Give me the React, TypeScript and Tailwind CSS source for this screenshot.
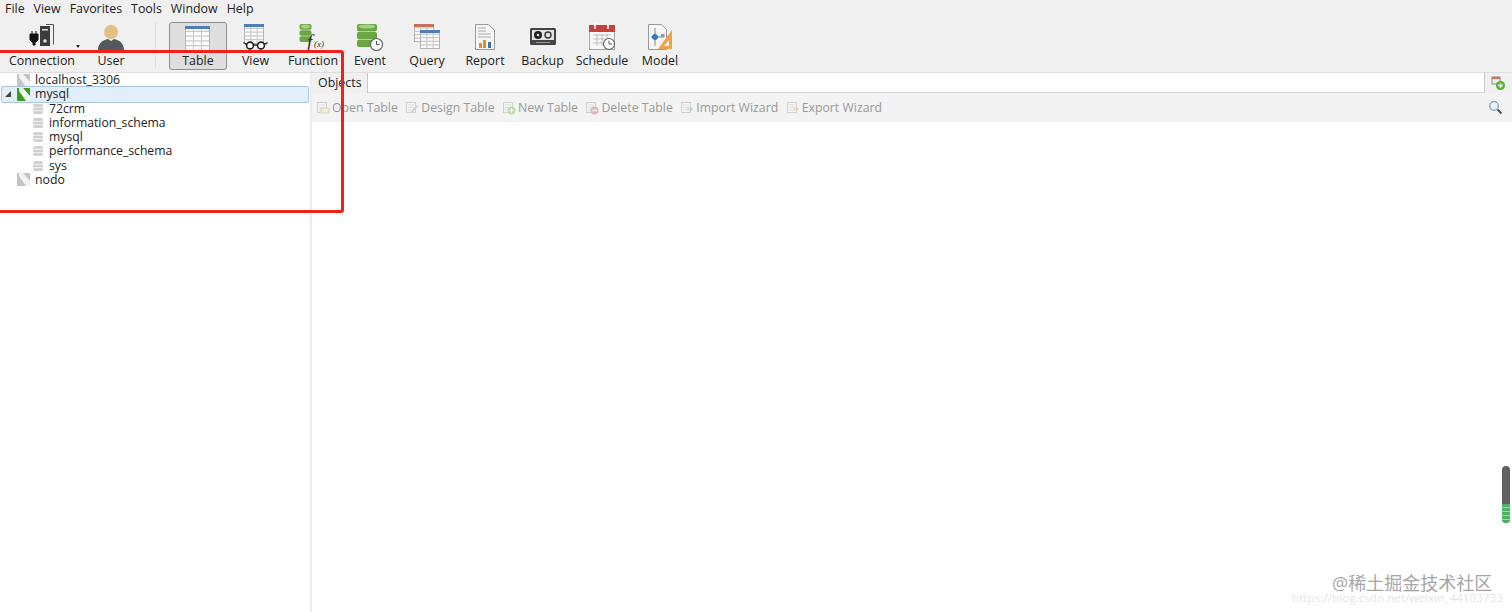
import type { ReactNode } from "react";

const font = "font-['Open_Sans','Noto_Sans_CJK_SC',sans-serif]";

function TableGrid({ x, y, w, h, head = "#4f7fb5" }: { x: number; y: number; w: number; h: number; head?: string }) {
  const rows = [];
  for (let i = 1; i < 5; i++) rows.push(y + (h * i) / 5);
  return (
    <g>
      <rect x={x} y={y} width={w} height={h} fill="#fbfbfb" stroke="#b4b4b4" />
      {rows.map((r) => (
        <line key={r} x1={x} x2={x + w} y1={r} y2={r} stroke="#bdbdbd" />
      ))}
      <line x1={x + w / 3} x2={x + w / 3} y1={y} y2={y + h} stroke="#c8c8c8" />
      <line x1={x + (2 * w) / 3} x2={x + (2 * w) / 3} y1={y} y2={y + h} stroke="#c8c8c8" />
      <rect x={x - 0.5} y={y - 0.5} width={w + 1} height={3} fill={head} />
    </g>
  );
}

function Drum({ x, y, w = 19, h = 22, color = "#6ba544" }: { x: number; y: number; w?: number; h?: number; color?: string }) {
  const band = (h - 1) / 3;
  return (
    <g>
      <rect x={x} y={y} width={w} height={band} rx={2} fill={color} />
      <rect x={x} y={y + band + 0.5} width={w} height={band} rx={2} fill={color} />
      <rect x={x} y={y + 2 * band + 1} width={w} height={band} rx={2} fill={color} />
      <ellipse cx={x + w / 2} cy={y + 2.5} rx={w / 2 - 1.5} ry={2} fill="#a6d180" />
    </g>
  );
}

function Clock({ cx, cy, r }: { cx: number; cy: number; r: number }) {
  return (
    <g>
      <circle cx={cx} cy={cy} r={r} fill="#fff" stroke="#666" strokeWidth={1.2} />
      <path d={`M${cx} ${cy - r * 0.6}V${cy}H${cx + r * 0.55}`} fill="none" stroke="#555" strokeWidth={1} />
    </g>
  );
}

const icons: Record<string, ReactNode> = {
  Connection: (
    <svg width="36" height="30" viewBox="0 0 36 30">
      <path d="M22 1.5h7.5v20" fill="none" stroke="#555" strokeWidth="1" />
      <rect x="16" y="3" width="10" height="20" fill="#3c3c3c" />
      <rect x="18" y="6" width="6" height="1.5" fill="#ddd" />
      <circle cx="21" cy="18" r="1.8" fill="#ddd" />
      <path d="M8 8v3M12 8v3M6 11h8v6l-2 2h-1v3H9v-3H8l-2-2z" fill="#111" stroke="#111" strokeWidth="1" />
    </svg>
  ),
  User: (
    <svg width="30" height="30" viewBox="0 0 30 30">
      <circle cx="15" cy="9" r="7" fill="#e3bf82" />
      <path d="M2 27c0-7 5-10 10-11l3 2 3-2c5 1 10 4 10 11z" fill="#55585c" />
    </svg>
  ),
  Table: (
    <svg width="28" height="28" viewBox="0 0 28 28">
      <TableGrid x={1.5} y={2.5} w={24} h={24} />
    </svg>
  ),
  View: (
    <svg width="30" height="30" viewBox="0 0 30 30">
      <TableGrid x={3.5} y={1.5} w={19} h={19} />
      <circle cx="9" cy="22.5" r="3.4" fill="#fff" stroke="#222" strokeWidth="1.6" />
      <circle cx="20" cy="22.5" r="3.4" fill="#fff" stroke="#222" strokeWidth="1.6" />
      <path d="M12.5 22h4M5.5 21.5l-3-2M23.5 21.5l3-2" stroke="#222" strokeWidth="1.4" />
    </svg>
  ),
  Function: (
    <svg width="30" height="30" viewBox="0 0 30 30">
      <Drum x={1.5} y={1} w={12} h={18} />
      <text x="9" y="25" fontFamily="Liberation Serif" fontStyle="italic" fontSize="19" fill="#333">f</text>
      <text x="16" y="24" fontFamily="Liberation Serif" fontStyle="italic" fontSize="9" fill="#333">(x)</text>
    </svg>
  ),
  Event: (
    <svg width="30" height="30" viewBox="0 0 30 30">
      <Drum x={2} y={1} w={20} h={23} />
      <Clock cx={21.5} cy={21.5} r={6} />
    </svg>
  ),
  Query: (
    <svg width="30" height="30" viewBox="0 0 30 30">
      <TableGrid x={2.5} y={1.5} w={19} h={17} head="#c9705a" />
      <TableGrid x={8.5} y={7.5} w={19} h={18} />
    </svg>
  ),
  Report: (
    <svg width="30" height="30" viewBox="0 0 30 30">
      <path d="M5.5 1.5h13l6 6v19h-19z" fill="#f6f6f6" stroke="#9a9a9a" />
      <path d="M8 5h8M8 8h8M8 11h13M8 14h13" stroke="#aaa" />
      <rect x="9" y="20" width="3" height="5" fill="#e98a2c" />
      <rect x="13" y="17" width="3" height="8" fill="#e98a2c" />
      <rect x="18" y="19" width="3" height="6" fill="#3a73b3" />
    </svg>
  ),
  Backup: (
    <svg width="30" height="30" viewBox="0 0 30 30">
      <rect x="2" y="5" width="26" height="17" rx="1.5" fill="#444" />
      <rect x="4" y="7" width="22" height="10" fill="#e4e4e4" />
      <circle cx="10" cy="12" r="4" fill="#222" />
      <circle cx="10" cy="12" r="1.3" fill="#ddd" />
      <circle cx="20" cy="12" r="3" fill="none" stroke="#333" strokeWidth="1.4" />
      <path d="M8 19.5h14" stroke="#999" />
    </svg>
  ),
  Schedule: (
    <svg width="30" height="30" viewBox="0 0 30 30">
      <rect x="2.5" y="2.5" width="25" height="24" fill="#f7f7f7" stroke="#a8a8a8" />
      <rect x="2" y="2" width="26" height="7" fill="#c8403c" />
      <path d="M8 0v6M21 0v6" stroke="#fff" strokeWidth="1.6" />
      <path d="M6 12h17M6 16h17M6 20h17M10 11v12M15 11v12M20 11v12" stroke="#c0c0c0" />
      <Clock cx={22} cy={21} r={5.5} />
    </svg>
  ),
  Model: (
    <svg width="30" height="30" viewBox="0 0 30 30">
      <path d="M3.5 1.5h13l5 5v20h-18z" fill="#f6f6f6" stroke="#9a9a9a" />
      <path d="M10 10l4 4-4 4-4-4z" fill="#3a78b8" />
      <path d="M10 5v5M10 18v5M14 14h4" stroke="#888" />
      <rect x="16" y="11" width="3.5" height="3.5" fill="#999" />
      <path d="M27 7v19H13z" fill="#eea24a" />
      <path d="M24 17v6h-5z" fill="#f6f6f6" />
    </svg>
  ),
};

const tools = [
  { label: "Connection", w: "w-[84px]" },
  { label: "User", w: "w-[54px]" },
  { label: "Table", w: "w-[58px]" },
  { label: "View", w: "w-[57px]" },
  { label: "Function", w: "w-[58px]" },
  { label: "Event", w: "w-[56px]" },
  { label: "Query", w: "w-[58px]" },
  { label: "Report", w: "w-[58px]" },
  { label: "Backup", w: "w-[57px]" },
  { label: "Schedule", w: "w-[62px]" },
  { label: "Model", w: "w-[54px]" },
];

function ToolButton({ label, w }: { label: string; w: string }) {
  const active = label === "Table";
  return (
    <div
      className={`${w} relative h-[48px] flex flex-col items-center shrink-0 rounded-[3px] ${
        active ? "border border-[#8f8f8f] bg-[#dedede]" : "pt-px"
      }`}
    >
      <div className="h-[30px] flex items-center justify-center">{icons[label]}</div>
      <span className="text-[12.4px] leading-[15px] text-[#222]">{label}</span>
      {label === "Connection" && <span className="absolute right-[4px] top-[23px] w-0 h-0 border-x-[2.5px] border-x-transparent border-t-[3px] border-t-[#222]" />}
    </div>
  );
}

function ServerIcon({ on }: { on?: boolean }) {
  return (
    <svg width="13" height="13" viewBox="0 0 13 13" className="shrink-0">
      <rect width="13" height="13" fill={on ? "#3f9a1f" : "#c4c4c4"} />
      <path d="M2 0h4l7 8v5H9L2 3z" fill={on ? "#f1f8ec" : "#f4f4f4"} />
    </svg>
  );
}

function DbIcon() {
  return (
    <svg width="10" height="10" viewBox="0 0 10 10" className="shrink-0">
      <rect width="10" height="10" rx="2" fill="#d0d0d0" />
      <path d="M0 3.3h10M0 6.7h10" stroke="#f4f4f4" />
    </svg>
  );
}

function ServerRow({ name, on }: { name: string; on?: boolean }) {
  return (
    <div className={`h-[14.25px] flex items-center relative ${on ? "" : "pl-[17px]"}`}>
      {on && <div className="absolute left-[1px] right-[1px] -top-px -bottom-px rounded-[2px] border border-[#a9c6e8] bg-[#e2eefb]" />}
      {on && <span className="relative ml-[5px] mr-[6px] w-0 h-0 border-l-[6px] border-l-transparent border-b-[6px] border-b-[#444]" />}
      <div className="relative flex items-center gap-[5px]">
        <ServerIcon on={on} />
        <span className="text-[12.3px] leading-[14px] text-[#222]">{name}</span>
      </div>
    </div>
  );
}

function DbRow({ name }: { name: string }) {
  return (
    <div className="h-[14.25px] flex items-center pl-[33px] gap-[6px]">
      <DbIcon />
      <span className="text-[12.2px] leading-[14px] text-[#222]">{name}</span>
    </div>
  );
}

function ActionIcon({ kind }: { kind: string }) {
  return (
    <svg width="14" height="14" viewBox="0 0 14 14" className="shrink-0 opacity-60">
      <rect x="1.5" y="1.5" width="9" height="10" fill="#f6f6f6" stroke="#bbb" />
      <path d="M3 4h6M3 6.5h6M3 9h6" stroke="#d2d2d2" />
      {kind === "open" && <rect x="5" y="7" width="8" height="5" fill="#f0e6c8" stroke="#c9c1a4" />}
      {kind === "design" && <path d="M6 11l6-7 1 1-6 7z" fill="#b5b5b5" />}
      {kind === "new" && <circle cx="9.5" cy="9.5" r="4" fill="#9ccf7f" />}
      {kind === "delete" && <circle cx="9.5" cy="9.5" r="4" fill="#d98a8e" />}
      {kind === "delete" && <path d="M7 9.5h5" stroke="#fff" strokeWidth="1.4" />}
      {kind === "new" && <path d="M7.5 9.5h4M9.5 7.5v4" stroke="#fff" strokeWidth="1.2" />}
      {kind === "import" && <path d="M7 8h5M10 6l2 2-2 2" fill="none" stroke="#9ab7a0" strokeWidth="1.2" />}
      {kind === "export" && <path d="M7 8h5M10 6l2 2-2 2" fill="none" stroke="#e9b27a" strokeWidth="1.2" />}
    </svg>
  );
}

const actions = [
  { label: "Open Table", kind: "open" },
  { label: "Design Table", kind: "design" },
  { label: "New Table", kind: "new" },
  { label: "Delete Table", kind: "delete" },
  { label: "Import Wizard", kind: "import" },
  { label: "Export Wizard", kind: "export" },
];

export default function App() {
  return (
    <div className={`${font} relative w-[1512px] h-[612px] overflow-hidden bg-[#f0f0f0] flex flex-col`}>
      {/* menu */}
      <div className="h-[16px] flex items-center gap-[9px] pl-[5px] pt-[2px] text-[12.4px] leading-none text-[#222]">
        {["File", "View", "Favorites", "Tools", "Window", "Help"].map((m) => (
          <span key={m}>{m}</span>
        ))}
      </div>

      {/* toolbar */}
      <div className="h-[56px] pt-[6px] flex items-start">
        {tools.slice(0, 2).map((t) => (
          <ToolButton key={t.label} {...t} />
        ))}
        <div className="ml-[17px] mr-[13px] w-px h-[46px] bg-[#dddddd]" />
        {tools.slice(2).map((t) => (
          <ToolButton key={t.label} {...t} />
        ))}
      </div>

      <div className="flex-1 flex min-h-0 border-t border-[#dedede]">
        {/* tree */}
        <div className="w-[312px] shrink-0 bg-white border-r-[2px] border-[#ececec]">
          <ServerRow name="localhost_3306" />
          <ServerRow name="mysql" on />
          {["72crm", "information_schema", "mysql", "performance_schema", "sys"].map((d) => (
            <DbRow key={d} name={d} />
          ))}
          <ServerRow name="nodo" />
        </div>

        {/* objects */}
        <div className="flex-1 flex flex-col min-w-0">
          <div className="h-[20px] flex bg-[#f0f0f0]">
            <div className="w-[56px] shrink-0 pl-[6px] text-[12.4px] leading-[19px] text-[#222] border-r border-[#c9c9c9]">Objects</div>
            <div className="flex-1 bg-white border-b border-[#d4d4d4]" />
            <div className="w-[28px] shrink-0 border-l border-[#c9c9c9] flex items-center justify-center">
              <svg width="15" height="15" viewBox="0 0 15 15">
                <rect x="1" y="1" width="8" height="7" fill="#eee" stroke="#8a8a8a" />
                <rect x="1" y="1" width="8" height="2" fill="#c9705a" />
                <circle cx="9.5" cy="9.5" r="4.5" fill="#4fb52e" />
                <path d="M7 9.5h5M9.5 7v5" stroke="#fff" strokeWidth="1.3" />
              </svg>
            </div>
          </div>
          <div className="h-[29px] bg-[#f3f3f3] flex items-center justify-between pl-[4px] pr-[9px] border-b border-[#f0f0f0]">
            <div className="flex items-center gap-[7.4px] pt-[2px]">
              {actions.map((a) => (
                <div key={a.label} className="flex items-center gap-[2px] text-[12.3px] leading-[14px] text-[#9a9a9a]">
                  <ActionIcon kind={a.kind} />
                  <span>{a.label}</span>
                </div>
              ))}
            </div>
            <svg width="15" height="15" viewBox="0 0 15 15">
              <circle cx="6" cy="6" r="4.3" fill="#eaf3fb" stroke="#7fa5c4" strokeWidth="1.3" />
              <path d="M9.5 9.5l4 4" stroke="#555" strokeWidth="2" />
            </svg>
          </div>
          <div className="flex-1 bg-white" />
        </div>
      </div>

      {/* red annotation */}
      <div className="absolute left-[-6px] top-[50px] w-[350px] h-[163px] border-[3px] border-[#f0201a] rounded-[3px] pointer-events-none" />

      {/* level meter */}
      <div className="absolute left-[1502px] top-[466px] w-[8px] h-[57px] rounded-[4px] bg-[#606060] overflow-hidden flex flex-col justify-end">
        <div className="h-[19px] bg-[#4bb35f] flex flex-col justify-evenly">
          <div className="h-px bg-[#9adba6]" />
          <div className="h-px bg-[#9adba6]" />
          <div className="h-px bg-[#9adba6]" />
          <div className="h-px bg-[#9adba6]" />
        </div>
      </div>

      {/* watermark */}
      <div className="absolute left-[1332px] top-[575px] text-[18px] leading-[16px] text-[#a6a6a6] whitespace-nowrap">@稀土掘金技术社区</div>
      <div className="absolute left-[1292px] top-[592px] text-[11.5px] leading-[11px] tracking-[0.1px] text-[#e4e4e4] whitespace-nowrap">https://blog.csdn.net/weixin_44103733</div>
    </div>
  );
}
